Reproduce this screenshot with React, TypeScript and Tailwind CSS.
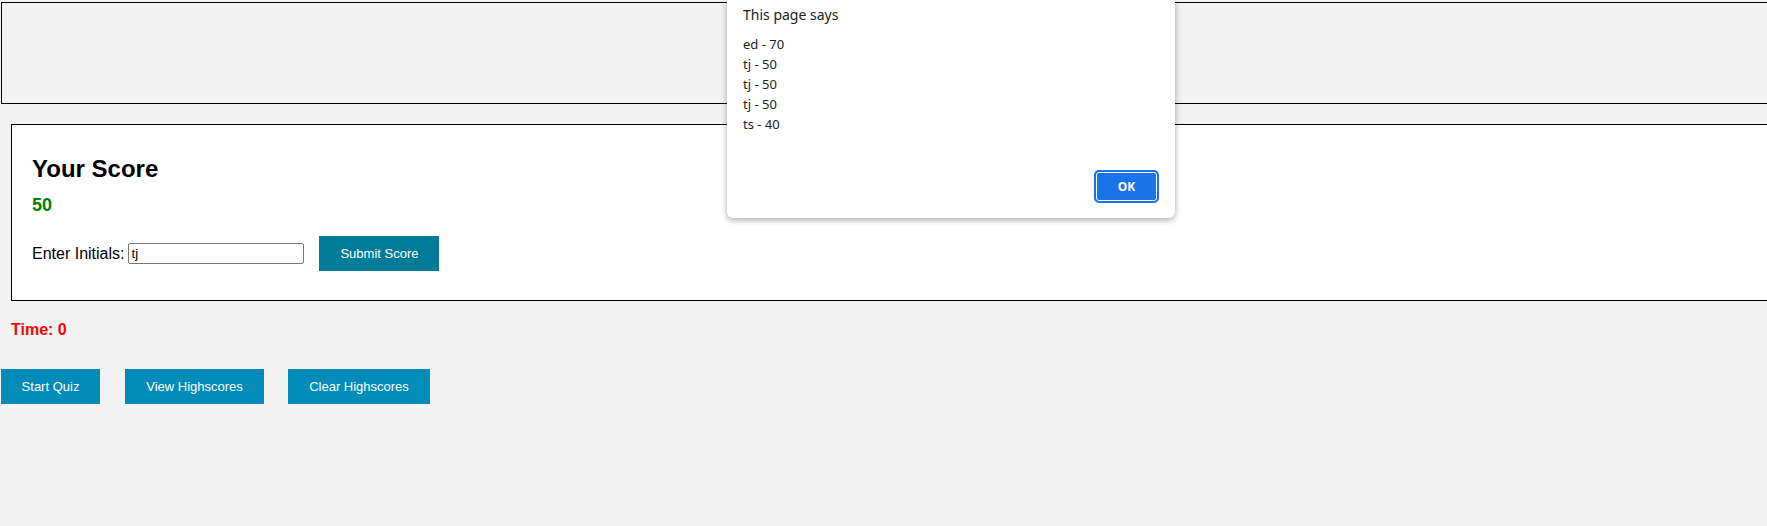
import React from 'react';

const scores = ['ed - 70', 'tj - 50', 'tj - 50', 'tj - 50', 'ts - 40'];

export default function App() {
  return (
    <div className="relative min-h-[526px] w-full overflow-hidden bg-[#f3f3f3] font-['Liberation_Sans',Arial,sans-serif] text-black">
      {/* header box (empty) */}
      <div className="ml-[1px] mt-[2px] h-[102px] w-[1800px] border border-black" />

      {/* score card */}
      <div className="ml-[11px] mt-[20px] w-[1800px] border border-black bg-white pb-[29px] pl-[20px] pt-[30px]">
        <h2 className="text-[24px] font-bold leading-[28px]">Your Score</h2>
        <div className="mt-[11px] text-[18px] font-bold leading-[22px] text-[#008000]">50</div>
        <div className="mt-[20px] flex items-center">
          <label className="text-[16px] leading-[18px]">Enter Initials:</label>
          <input
            type="text"
            defaultValue="tj"
            className="ml-[4px] h-[21px] w-[176px] rounded-[2px] border border-[#767676] bg-white px-[2px] font-['Liberation_Sans',Arial,sans-serif] text-[13.33px] outline-none"
          />
          <button className="ml-[15px] h-[35px] w-[120px] bg-[#007c98] text-[13px] text-white">Submit Score</button>
        </div>
      </div>

      <div className="ml-[11px] mt-[20px] text-[16px] font-bold leading-[18px] text-[#ff0000]">Time: 0</div>

      <div className="ml-[1px] mt-[30px] flex">
        <button className="h-[35px] w-[99px] bg-[#008bb9] text-[13px] text-white">Start Quiz</button>
        <button className="ml-[25px] h-[35px] w-[139px] bg-[#008bb9] text-[13px] text-white">View Highscores</button>
        <button className="ml-[24px] h-[35px] w-[142px] bg-[#008bb9] text-[13px] text-white">Clear Highscores</button>
      </div>

      {/* browser alert */}
      <div className="absolute left-[727px] top-0 flex h-[218px] w-[448px] flex-col rounded-b-[6px] bg-white px-[16px] pt-[5px] font-['Noto_Sans',sans-serif] text-[#202124] shadow-[0_2px_6px_rgba(0,0,0,0.35)]">
        <div className="text-[14px] leading-[20px]">This page says</div>
        <div className="mt-[9px] text-[13px] leading-[20px]">
          {scores.map((s, i) => (
            <div key={i}>{s}</div>
          ))}
        </div>
        <div className="mt-auto flex justify-end pb-[15px]">
          <button className="h-[33px] w-[65px] rounded-[5px] border-2 border-[#1a73e8] bg-[#1a73e8] text-[12px] font-bold text-white shadow-[inset_0_0_0_1px_#fff]">
            OK
          </button>
        </div>
      </div>
    </div>
  );
}
